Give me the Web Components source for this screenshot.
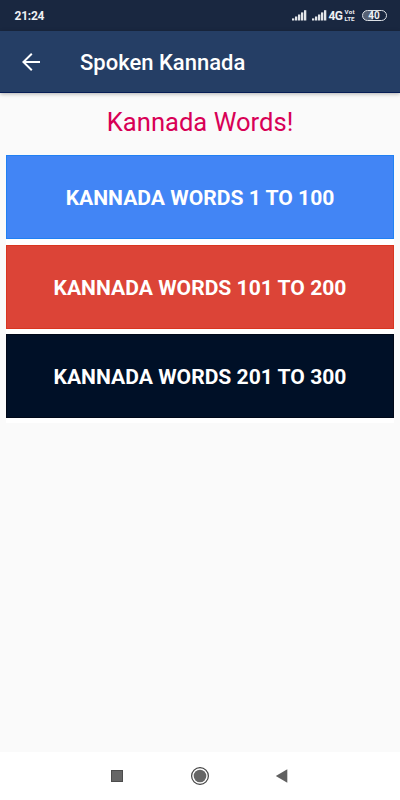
<!DOCTYPE html>
<html lang="en">
<head>
<meta charset="utf-8">
<title>Spoken Kannada</title>
<style>
  body {
    margin: 0;
    height: 800px;
    display: flex;
    flex-direction: column;
    overflow: hidden;
    background: #fafafa;
    font-family: Roboto, sans-serif;
  }
  main {
    flex: 1;
    padding: 0 6px;
  }
  h1 {
    margin: 0;
    height: 62px;
    line-height: 58px;
    text-align: center;
    font-size: 25.6px;
    font-weight: 400;
    color: #d80056;
  }
</style>
</head>
<body>
  <status-bar>21:24</status-bar>
  <app-bar>Spoken Kannada</app-bar>
  <main>
    <h1>Kannada Words!</h1>
    <word-list>
      <word-button color="#4285f5" edge="#2080f3">Kannada Words 1 to 100</word-button>
      <word-button color="#dc4437" edge="#d93520">Kannada Words 101 to 200</word-button>
      <word-button color="#001027" edge="#000818">Kannada Words 201 to 300</word-button>
    </word-list>
  </main>
  <nav-bar></nav-bar>

<script>
const makeTemplate = (html) => {
  const template = document.createElement('template');
  template.innerHTML = html;
  return template;
};

class BaseElement extends HTMLElement {
  constructor() {
    super();

    this.attachShadow({mode: 'open'});
    this.shadowRoot.appendChild(this.constructor.template.content.cloneNode(true));
  }
}

class SignalBars extends BaseElement {
  static template = makeTemplate(`
    <style>
      :host { display: block; width: 15px; height: 11px; }
      svg { display: block; }
    </style>
    <svg width="15" height="11" viewBox="0 0 15 11" fill="#e3e6ea">
      <rect x="0" y="8.4" width="2.3" height="2.1"/>
      <rect x="3" y="6.5" width="2.3" height="4"/>
      <rect x="6" y="4.5" width="2.3" height="6"/>
      <rect x="9" y="2.4" width="2.3" height="8.1"/>
      <rect x="12" y="0.2" width="2.3" height="10.3"/>
    </svg>
  `);
}

class StatusBar extends BaseElement {
  static template = makeTemplate(`
    <style>
      :host {
        display: flex;
        align-items: center;
        box-sizing: border-box;
        height: 31px;
        padding: 0 13.5px 0 14.5px;
        background: #192740;
        color: #eef0f3;
        font-weight: 700;
      }
      .time { flex: 1; font-size: 12px; line-height: 31px; letter-spacing: -.25px; padding-top: 1px; }
      signal-bars { margin-right: 5px; }
      .network { width: 16px; font-size: 12px; letter-spacing: -.6px; }
      .volte {
        width: 17px;
        font-size: 6.2px;
        line-height: 7px;
      }
      .volte span { display: block; height: 7px; }
      .volte span:first-child { letter-spacing: .3px; }
      .battery {
        box-sizing: border-box;
        width: 25px;
        height: 11px;
        border: 1px solid #dde1e6;
        border-radius: 6px;
        background: linear-gradient(90deg, #566174 45%, #192740 45%);
        text-align: center;
        font-size: 10px;
        line-height: 9.5px;
      }
    </style>
    <div class="time"><slot></slot></div>
    <signal-bars></signal-bars>
    <signal-bars style="margin-right: 2px"></signal-bars>
    <div class="network">4G</div>
    <div class="volte"><span>Vot</span><span>LTE</span></div>
    <div class="battery">40</div>
  `);
}

class AppBar extends BaseElement {
  static template = makeTemplate(`
    <style>
      :host {
        display: flex;
        align-items: center;
        box-sizing: border-box;
        height: 62px;
        padding: 0 22px;
        background: #253e65;
        border-bottom: 1px solid #061c55;
        box-shadow: 0 1px 4px rgba(0,0,0,.3);
        color: #fff;
        font-size: 22px;
        font-weight: 500;
      }
      svg { display: block; margin-right: 40px; }
      .title { padding-top: 2px; }
    </style>
    <svg width="18" height="18" viewBox="0 0 18 18" fill="none" stroke="#fff" stroke-width="2">
      <path d="M18 9H1.5M9.8 .8L1.4 9l8.4 8.2"/>
    </svg>
    <div class="title"><slot></slot></div>
  `);
}

class WordList extends BaseElement {
  static template = makeTemplate(`
    <style>
      :host {
        display: flex;
        flex-direction: column;
        gap: 5.7px;
        padding-bottom: 5px;
        background: #fff;
      }
    </style>
    <slot></slot>
  `);
}

class WordButton extends BaseElement {
  static template = makeTemplate(`
    <style>
      :host { display: block; }
      button {
        display: block;
        width: 100%;
        height: 84px;
        padding: 1px 0 0;
        border: 1px solid;
        color: #fff;
        font: 700 21.1px Roboto, sans-serif;
        text-transform: uppercase;
        white-space: nowrap;
      }
    </style>
    <button><slot></slot></button>
  `);

  connectedCallback() {
    const button = this.shadowRoot.querySelector('button');
    button.style.backgroundColor = this.getAttribute('color');
    button.style.borderColor = this.getAttribute('edge');
  }
}

class NavBar extends BaseElement {
  static template = makeTemplate(`
    <style>
      :host {
        display: flex;
        align-items: center;
        justify-content: center;
        gap: 62px;
        height: 48px;
        background: #fff;
      }
      svg { display: block; }
    </style>
    <svg width="20" height="20" viewBox="0 0 20 20">
      <rect x="3.5" y="4.5" width="11" height="11" fill="#666" stroke="#4c4c4c"/>
    </svg>
    <svg width="20" height="20" viewBox="0 0 20 20">
      <circle cx="10" cy="10" r="8.4" fill="none" stroke="#444" stroke-width="1.2"/>
      <circle cx="10" cy="10" r="6.3" fill="#666"/>
    </svg>
    <svg width="20" height="20" viewBox="0 0 20 20">
      <path d="M3.8 10L15.3 3.2v13.6z" fill="#606060"/>
    </svg>
  `);
}

window.customElements.define('signal-bars', SignalBars);
window.customElements.define('status-bar', StatusBar);
window.customElements.define('app-bar', AppBar);
window.customElements.define('word-list', WordList);
window.customElements.define('word-button', WordButton);
window.customElements.define('nav-bar', NavBar);
</script>
</body>
</html>
